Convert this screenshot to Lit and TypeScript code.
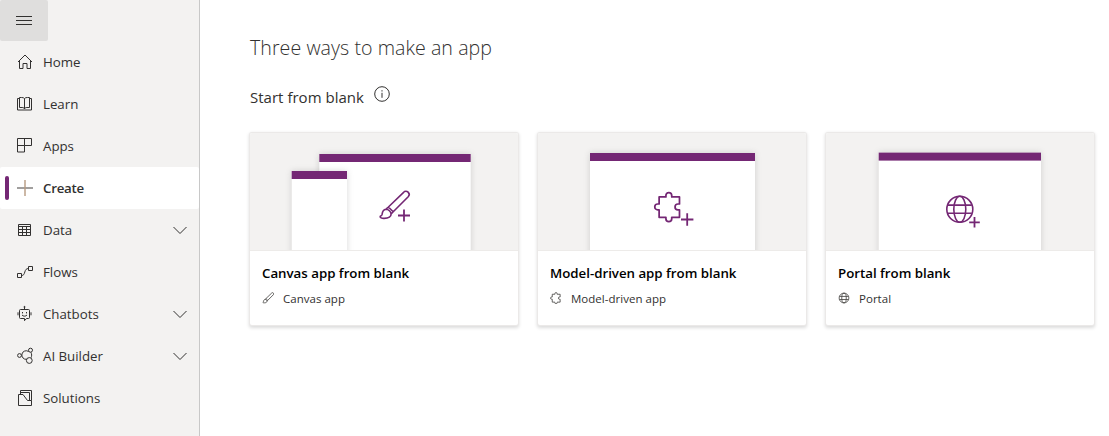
import { LitElement, html, svg, css, type SVGTemplateResult } from "lit";
import { customElement, property } from "lit/decorators.js";

const icons: Record<string, SVGTemplateResult> = {
  menu: svg`<path d="M0 2.5h16M0 6.5h16M0 10.5h16"/>`,
  home: svg`<path d="M2 9 9 2l7 7M3.500 7.800v7.700h3.500v-5h4v5h3.500V7.800"/>`,
  learn: svg`<path d="M8.500 3.500v10.500M8.500 3.500c-.8-.8-1.600-1-3-1h-2v10h2.500c1.300 0 2 .3 2.500 1.500.5-1.200 1.200-1.500 2.500-1.500h2.500v-10h-2c-1.400 0-2.200.2-3 1M3.500 3.500h-2v11.500h14V3.500h-2"/>`,
  apps: svg`<path d="M1.500 1.500h14v7h-7v6.500h-7zM8.500 1.500v7M1.500 8.500h7"/>`,
  create: svg`<path d="M1 9h16" stroke="#8a8886" stroke-width="1.600"/><path d="M9 1v16" stroke="#b79a80" stroke-width="1.400"/>`,
  data: svg`<path d="M2.500 3.500h12v11h-12zM2.500 5.500h12M2.500 8.500h12M2.500 11.500h12M6.500 5.500v9M10.500 5.500v9"/>`,
  flows: svg`<path d="M1.500 10.500h4v4h-4zM12.500 3.500h4v4h-4zM5.500 12.500c2.200 0 2.600-1.200 3.300-3.500S10.300 5.500 12.500 5.500"/>`,
  bots: svg`<path d="M8.500 1.500v3M4.500 4.500h8a1 1 0 0 1 1 1v7a1 1 0 0 1-1 1h-2l-2 2.200v-2.200h-4a1 1 0 0 1-1-1v-7a1 1 0 0 1 1-1zM2 7.300v3M15 7.300v3M6.500 7v1.400M10.500 7v1.400M6 10c1.300 1.500 3.700 1.500 5 0"/><circle cx="8.500" cy="2" r=".6"/>`,
  ai: svg`<circle cx="3.500" cy="8.500" r="1.900"/><circle cx="14.500" cy="3.200" r="2"/><circle cx="13.300" cy="13.500" r="2.900"/><path d="M12.700 4.600A4.300 4.300 0 1 0 10.800 12.300M14.900 5.300c1 1.900 1 3.700.1 5.500"/>`,
  solutions: svg`<path d="M4.500 5.500v-4h11v10M4.500 3.500h9v8M2.500 16.500v-11h4.500l4.500 6h4v5z"/>`,
  chevron: svg`<path d="M1.500 5 8 11.500 14.500 5"/>`,
  info: svg`<circle cx="8" cy="8" r="7.300"/><path d="M8 6.800v5M8 4.200v1.300"/>`,
};

const brush = svg`<path d="M10.600 17.500 25.800 2.800a3.150 3.150 0 0 1 4.600 4.400L15.400 22.200M10.600 17.500l4.800 4.700M8.200 19.700l2.400-2.200M13.300 24.500l2.100-2.300M8.200 19.700c-3 .4-3.700 2.800-3.900 5.200-.2 1.200-1 1.600-1.900 1.800-.5 1.400 1.500 2.300 4 2.200 4.500 0 7-1.800 6.900-4.400-.2-2.300-2.600-4.800-5.100-4.800z"/>`;
const puzzle = svg`<path d="M6 6h7V4.500a3 3 0 0 1 6 0V6h8v7.300h-1.600a3 3 0 0 0 0 6H27V27h-8v1.500a3 3 0 0 1-6 0V27H6v-7.700H4.500a3 3 0 0 1 0-6H6z"/>`;
const globe = svg`<circle cx="16" cy="16" r="13"/><ellipse cx="16" cy="16" rx="6" ry="13"/><path d="M4 11.800h24M4 20h24"/>`;

@customElement("ui-icon")
class UiIcon extends LitElement {
  @property() name = "";
  @property({ type: Number }) size = 18;
  static styles = css`
    :host { display: block; flex: none; }
    svg { display: block; fill: none; stroke: currentColor; stroke-width: 1; }
  `;
  render() {
    return html`<svg width=${this.size} height=${this.size} viewBox="0 0 ${this.size} ${this.size}">${icons[this.name]}</svg>`;
  }
}

interface NavItem { label: string; icon: string; active?: boolean; more?: boolean }
const nav: NavItem[] = [
  { label: "Home", icon: "home" },
  { label: "Learn", icon: "learn" },
  { label: "Apps", icon: "apps" },
  { label: "Create", icon: "create", active: true },
  { label: "Data", icon: "data", more: true },
  { label: "Flows", icon: "flows" },
  { label: "Chatbots", icon: "bots", more: true },
  { label: "AI Builder", icon: "ai", more: true },
  { label: "Solutions", icon: "solutions" },
];

const frame = (x: number, y: number, w: number) => svg`
  <rect class="shade" x=${x} y=${y} width=${w} height="130"/>
  <rect class="pane" x=${x} y=${y} width=${w} height="130"/>
  <rect class="bar" x=${x} y=${y} width=${w} height="8"/>`;
const plus = (x: number, y: number, r: number) => svg`<path class="line" d="M${x - r} ${y}h${2 * r}M${x} ${y - r}v${2 * r}"/>`;

const cards = [
  {
    title: "Canvas app from blank", kind: "Canvas app", glyph: brush,
    art: svg`${frame(69.300, 21, 151.400)}${frame(41.700, 38, 55.300)}<g class="line fine" transform="translate(127.800 56.500)">${brush}</g>${plus(154, 82.500, 6)}`,
  },
  {
    title: "Model-driven app from blank", kind: "Model-driven app", glyph: puzzle,
    art: svg`${frame(52, 20, 165)}<g class="line" transform="translate(115.300 58.100) scale(.97)">${puzzle}</g>${plus(149.200, 86.500, 6.200)}`,
  },
  {
    title: "Portal from blank", kind: "Portal", glyph: globe,
    art: svg`${frame(52.700, 19.600, 162.300)}<g class="line fine" transform="translate(117.800 60.300)">${globe}</g>${plus(148.500, 89.300, 5.300)}`,
  },
];

@customElement("app-root")
class AppRoot extends LitElement {
  static styles = css`
    :host { display: flex; width: 100%; height: 436px; overflow: hidden; background: #fff; color: #323130; font-family: "Open Sans", "Noto Sans", sans-serif; font-size: 13.300px; }
    * { box-sizing: border-box; }
    .side { width: 200px; flex: none; background: #f3f2f1; border-right: 1px solid #c8c8c8; }
    .menu { width: 48px; height: 41px; padding: 14px 0 0 16px; background: #dfdedd; border-radius: 2px; }
    .item { display: flex; align-items: center; height: 42px; padding: 0 11px 0 16px; border-radius: 2px; }
    .item .label { flex: 1; margin-left: 9px; letter-spacing: -.020px; white-space: nowrap; }
    .active { background: #fff; padding-left: 5px; }
    .active::before { content: ""; width: 4px; height: 24px; margin-right: 7px; border-radius: 2px; background: #742774; }
    .active .label { font-weight: 600; letter-spacing: -.250px; }
    main { flex: 1; padding: 32px 0 0 50px; }
    h1 { margin: 0; font-size: 19.600px; line-height: 32px; font-weight: 300; letter-spacing: .050px; }
    .sub { display: flex; align-items: center; gap: 10px; height: 24px; margin-top: 21px; }
    h2 { margin: 0; font-size: 15px; line-height: 24px; font-weight: 400; letter-spacing: .020px; }
    .sub ui-icon { padding-bottom: 6px; }
    .cards { display: flex; gap: 20px; margin-top: 24px; }
    .card { width: 268px; height: 192px; flex: none; border-radius: 2px; background: #fff; box-shadow: 0 0 0 1px #ebe9e8, 0 1.600px 3.600px 1px rgba(0,0,0,.14); }
    .art { display: block; width: 268px; height: 118px; background: #f3f2f1; border-bottom: 1px solid #edebe9; border-radius: 2px 2px 0 0; }
    .shade { fill: #777; opacity: .28; filter: blur(3px); }
    .pane { fill: #fff; }
    .bar { fill: #742774; }
    .line { fill: none; stroke: #742774; stroke-width: 1.800; stroke-linejoin: round; }
    .fine { stroke-width: 1.600; }
    h3 { margin: 12px 12px 0; font-size: 13.300px; line-height: 20px; font-weight: 600; color: #000; letter-spacing: -.020px; white-space: nowrap; }
    .kind { display: flex; align-items: center; gap: 9px; margin: 7px 12px 0; height: 16px; font-size: 11.500px; letter-spacing: .020px; }
    .glyph { width: 12px; height: 12px; fill: none; stroke: #484644; stroke-width: 2.200; }
  `;
  render() {
    return html`
      <nav class="side">
        <div class="menu"><ui-icon name="menu"></ui-icon></div>
        ${nav.map((n) => html`<div class="item ${n.active ? "active" : ""}">
          <ui-icon name=${n.icon}></ui-icon><span class="label">${n.label}</span>
          ${n.more ? html`<ui-icon name="chevron" size="16"></ui-icon>` : ""}
        </div>`)}
      </nav>
      <main>
        <h1>Three ways to make an app</h1>
        <div class="sub"><h2>Start from blank</h2><ui-icon name="info" size="16"></ui-icon></div>
        <section class="cards">
          ${cards.map((c) => html`<article class="card">
            <svg class="art" viewBox="0 0 268 117">${c.art}</svg>
            <h3>${c.title}</h3>
            <div class="kind"><svg class="glyph" viewBox="0 0 32 32">${c.glyph}</svg><span>${c.kind}</span></div>
          </article>`)}
        </section>
      </main>`;
  }
}
